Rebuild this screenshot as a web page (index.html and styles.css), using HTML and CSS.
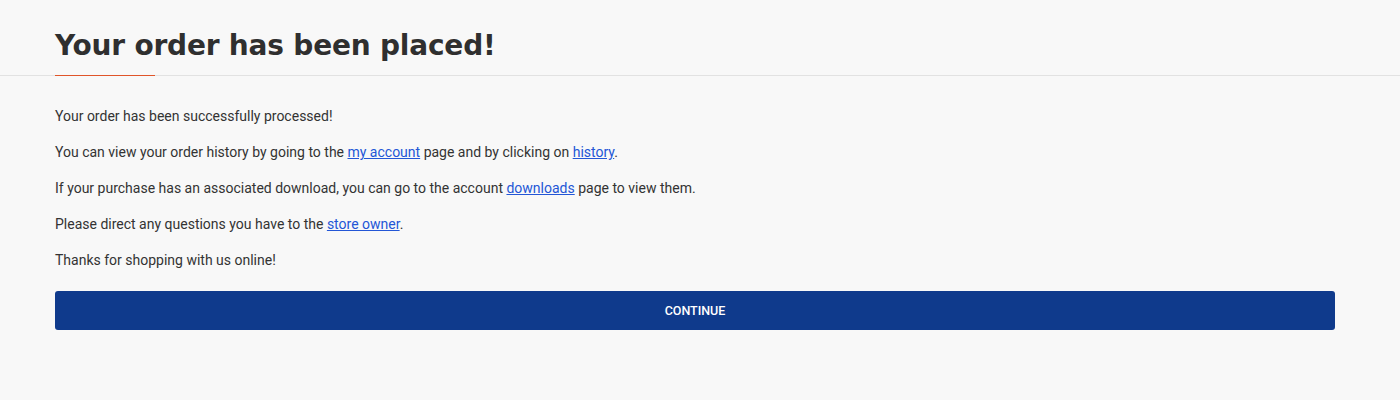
FILE: index.html
```html
<!DOCTYPE html>
<html lang="en">
<head>
<meta charset="utf-8">
<title>Your order has been placed!</title>
<link rel="stylesheet" href="styles.css">
</head>
<body>
<header class="page-head">
  <div class="container">
    <h1 class="title">Your order has been placed!</h1>
  </div>
</header>
<main class="container content">
  <p>Your order has been successfully processed!</p>
  <p>You can view your order history by going to the <a href="#">my account</a> page and by clicking on <a href="#">history</a>.</p>
  <p>If your purchase has an associated download, you can go to the account <a href="#">downloads</a> page to view them.</p>
  <p>Please direct any questions you have to the <a href="#">store owner</a>.</p>
  <p>Thanks for shopping with us online!</p>
  <a href="#" class="btn-continue">CONTINUE</a>
</main>
</body>
</html>
```
FILE: styles.css
```css
html, body {
  margin: 0;
  padding: 0;
  background: #f8f8f8;
}
body {
  font-family: Roboto, "Liberation Sans", sans-serif;
  font-size: 14px;
  color: #333;
}
.container {
  width: 1280px;
  margin-left: 55px;
}
.page-head {
  border-bottom: 1px solid #e2e2e2;
}
.title {
  margin: 0;
  padding-top: 25px;
  height: 50px;
  box-sizing: content-box;
  position: relative;
  font-family: "DejaVu Sans", sans-serif;
  font-weight: 700;
  font-size: 28px;
  line-height: 42px;
  color: #2f2f2f;
  letter-spacing: -0.2px;
}
.title::after {
  content: "";
  position: absolute;
  left: 0;
  bottom: -1px;
  width: 100px;
  height: 1px;
  background: #e0552a;
}
.content {
  padding-top: 30px;
}
.content p {
  margin: 0 0 16px;
  line-height: 20px;
}
.content a {
  color: #2356d6;
  text-decoration: underline;
}
.btn-continue {
  display: block;
  margin-top: 21px;
  height: 39px;
  line-height: 39px;
  background: #0f3a8c;
  border-radius: 3px;
  text-align: center;
  color: #fff !important;
  text-decoration: none !important;
  font-size: 12.5px;
  font-weight: 500;
}
```
